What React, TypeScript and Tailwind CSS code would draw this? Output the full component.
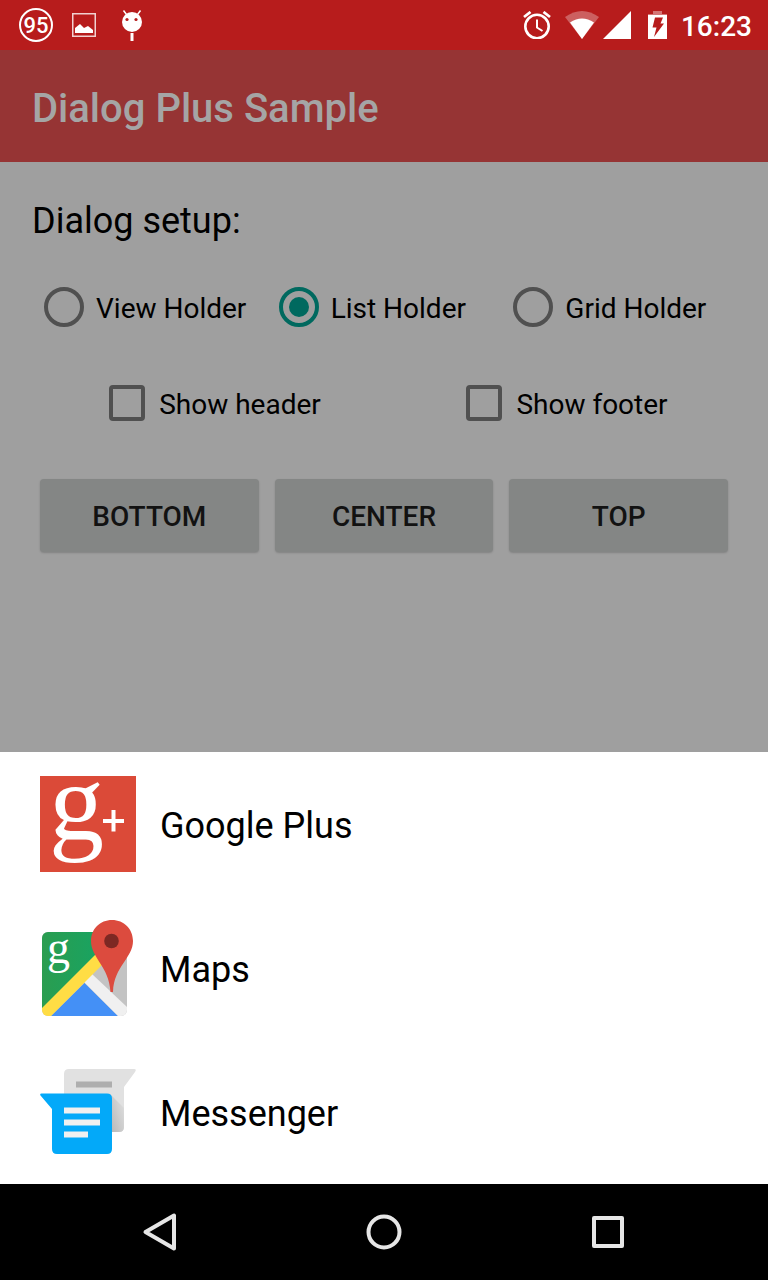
import { useState } from 'react';

function BatteryLevelBadge() {
  return (
    <span className="flex size-[34px] items-center justify-center rounded-full border-2 border-white pt-0.5 font-['Roboto',sans-serif] text-[22px] leading-none font-medium text-white">
      95
    </span>
  );
}

function PictureIcon() {
  return (
    <svg className="h-6 w-6" viewBox="0 0 24 24" aria-hidden="true">
      <rect x="0.75" y="0.75" width="22.5" height="22.5" fill="none" stroke="#fff" strokeOpacity="0.8" strokeWidth="1.5" />
      <path d="M3 20v-5l5-4 4 4 4-2 5 4v3z" fill="#fff" />
    </svg>
  );
}

function DroidIcon() {
  return (
    <svg className="h-8 w-[22px]" viewBox="0 0 22 32" aria-hidden="true">
      <path d="M2.500 1.500l3 4M19.500 1.500l-3 4" stroke="#fff" strokeWidth="1.5" />
      <ellipse cx="11" cy="13" rx="10" ry="10" fill="#fff" />
      <circle cx="6" cy="10.500" r="1.600" fill="#b71c1c" />
      <circle cx="15" cy="10.500" r="1.600" fill="#b71c1c" />
      <path d="M9.500 24h3v8h-3z" fill="#fff" />
    </svg>
  );
}

function AlarmIcon() {
  return (
    <svg className="h-7 w-7" viewBox="0 0 28 28" fill="none" stroke="#fff" aria-hidden="true">
      <circle cx="14" cy="15.500" r="11.700" strokeWidth="2.600" />
      <path d="M1 6l6.500-5M27 6l-6.500-5" strokeWidth="2.800" />
      <path d="M14 8.500v8l5.500 3.500" strokeWidth="2" />
    </svg>
  );
}

function WifiIcon() {
  return (
    <svg className="h-7 w-[34px]" viewBox="0 0 34 28" fill="#fff" aria-hidden="true">
      <path d="M0 6Q17-6 34 6L17 28z" fillOpacity="0.3" />
      <path d="M5 11.500Q17 3.500 29 11.500L17 28z" />
    </svg>
  );
}

function SignalIcon() {
  return (
    <svg className="h-7 w-7" viewBox="0 0 28 28" fill="#fff" aria-hidden="true">
      <path d="M28 0v28H0z" />
    </svg>
  );
}

function ChargingIcon() {
  return (
    <svg className="h-7 w-[19px]" viewBox="0 0 19 28" aria-hidden="true">
      <path d="M5 0h9v3h5v1H0V3h5z" fill="#fff" fillOpacity="0.4" />
      <path d="M0 4h19v24H0z" fill="#fff" />
      <path d="M7 6.500h8l-2.500 6H16L6 26l2.500-9.500h-4z" fill="#b71c1c" />
    </svg>
  );
}

function GooglePlusLogo() {
  return (
    <svg className="size-24 shrink-0 overflow-visible" viewBox="0 0 96 96" aria-hidden="true">
      <rect width="96" height="96" fill="#db4a38" />
      <text x="9" y="64" fontSize="110" fill="#fff" className="font-['Liberation_Serif',serif]">
        g
      </text>
      <path d="M71.500 34h4v9H84v4h-8.500v8.500h-4V47H63v-4h8.500z" fill="#fff" />
    </svg>
  );
}

function MapsLogo() {
  return (
    <svg className="size-24 shrink-0 overflow-visible" viewBox="0 0 96 96" aria-hidden="true">
      <defs>
        <clipPath id="map-tile">
          <rect x="2" y="12" width="85" height="84" rx="6" />
        </clipPath>
        <linearGradient id="map-green" x1="0" y1="0" x2="1" y2="0">
          <stop offset="0" stopColor="#2a9d50" />
          <stop offset="1" stopColor="#16a464" />
        </linearGradient>
      </defs>
      <g clipPath="url(#map-tile)">
        <path d="M2 12h85v84H2z" fill="#c3c3c3" />
        <path d="M2 12h66L55 36 2 89z" fill="url(#map-green)" />
        <path d="M44.500 63L78 96H11z" fill="#4490f6" />
        <path d="M52 54l-8 8 34 34h9v-9z" fill="#f0f0f0" />
        <path d="M2 88l57-57 8 9L11 96H2z" fill="#ffdd45" />
      </g>
      <text x="7" y="43" fontSize="46" fill="#fff" className="font-['Liberation_Serif',serif]">
        g
      </text>
      <path d="M72 0c12 0 21 9 21 21 0 17-19 25-20 51h-2.500C69 46 51 38 51 21 51 9 60 0 72 0z" fill="#dc4b3e" />
      <circle cx="71.500" cy="21" r="7.300" fill="#7d2823" />
    </svg>
  );
}

function MessengerLogo() {
  return (
    <svg className="size-24 shrink-0" viewBox="0 0 96 96" aria-hidden="true">
      <defs>
        <linearGradient id="bubble-shade" gradientUnits="userSpaceOnUse" x1="66" y1="44" x2="86" y2="38">
          <stop offset="0" stopColor="#bcbcbc" />
          <stop offset="1" stopColor="#e1e1e1" />
        </linearGradient>
      </defs>
      <path d="M29 5h65q3 0 1 3L84 23v40q0 5-5 5H24V10q0-5 5-5z" fill="#e1e1e1" />
      <path d="M70 30l14 14v19q0 5-5 5h-9z" fill="url(#bubble-shade)" />
      <path d="M36 17.500h36v6H36z" fill="#aeaeae" />
      <path d="M1.500 29.500H67q5 0 5 5V85q0 5-5 5H17q-5 0-5-5V45L.5 31.500Q-.5 29.500 1.500 29.500z" fill="#03a9f9" />
      <path d="M24 43.500h36v6H24zM24 55.500h36v6H24zM24 67.500h24v6H24z" fill="#f0f0f0" />
    </svg>
  );
}

const holders = ['View Holder', 'List Holder', 'Grid Holder'];
const options = ['Show header', 'Show footer'];
const positions = ['BOTTOM', 'CENTER', 'TOP'];
const apps = [
  { name: 'Google Plus', Logo: GooglePlusLogo },
  { name: 'Maps', Logo: MapsLogo },
  { name: 'Messenger', Logo: MessengerLogo },
];

export default function App() {
  const [holder, setHolder] = useState('List Holder');

  return (
    <div className="flex min-h-screen flex-col bg-[#9f9f9f] font-['Roboto',sans-serif] text-black">
      <div className="flex h-[50px] items-center justify-between bg-[#b71c1c] pr-4 pl-[19px]">
        <div className="flex items-center">
          <BatteryLevelBadge />
          <span className="ml-[19px]"><PictureIcon /></span>
          <span className="ml-[25px]"><DroidIcon /></span>
        </div>
        <div className="flex items-center">
          <AlarmIcon />
          <span className="ml-[14px]"><WifiIcon /></span>
          <span className="ml-1"><SignalIcon /></span>
          <span className="ml-[17px]"><ChargingIcon /></span>
          <span className="ml-[14px] pt-[3px] text-[28px] leading-8 font-medium text-white">16:23</span>
        </div>
      </div>

      <header className="flex h-28 items-center bg-[#963434] px-8">
        <h1 className="pt-1.5 text-[40px] leading-[48px] font-medium text-[#a5a5a5]">Dialog Plus Sample</h1>
      </header>

      <main className="flex-1 px-8 pt-[37px]">
        <h2 className="text-[36px] leading-[44px]">Dialog setup:</h2>

        <div role="radiogroup" aria-label="Holder" className="mt-[31px] grid grid-cols-3">
          {holders.map((name) => (
            <label key={name} className="flex h-[66px] items-center gap-3 pl-3 text-[28px] whitespace-nowrap">
              <input
                type="radio"
                name="holder"
                checked={holder === name}
                onChange={() => setHolder(name)}
                className="grid size-10 shrink-0 appearance-none place-items-center rounded-full border-4 border-[#505050] before:size-5 before:rounded-full checked:border-[#00695f] checked:before:bg-[#00695f]"
              />
              <span className="pt-[3px]">{name}</span>
            </label>
          ))}
        </div>

        <div className="mt-[30px] grid grid-cols-2">
          {options.map((name) => (
            <label key={name} className="flex h-[66px] items-center justify-center gap-[14px] pl-[14px] text-[28px] whitespace-nowrap">
              <input
                type="checkbox"
                className="size-9 shrink-0 appearance-none rounded-[4px] border-4 border-[#505050] checked:border-[#00695f] checked:bg-[#00695f]"
              />
              <span className="pt-[3px]">{name}</span>
            </label>
          ))}
        </div>

        <div className="mt-[43px] grid grid-cols-3">
          {positions.map((name) => (
            <button
              key={name}
              type="button"
              className="mx-2 h-[73px] rounded-[4px] bg-[#848685] pt-0.5 text-[28px] font-medium text-[#121212] shadow-[0_1px_2px_#00000030]"
            >
              {name}
            </button>
          ))}
        </div>
      </main>

      <section role="dialog" aria-label="Choose an app" className="bg-white">
        <ul>
          {apps.map(({ name, Logo }) => (
            <li key={name}>
              <button type="button" className="flex w-full items-center gap-6 px-10 py-6 text-left text-[36px] leading-[44px]">
                <Logo />
                <span className="pt-1">{name}</span>
              </button>
            </li>
          ))}
        </ul>
      </section>

      <nav className="grid h-24 grid-cols-3 bg-black px-12">
        <button type="button" aria-label="Back" className="flex items-center justify-center">
          <svg className="size-12" viewBox="0 0 48 48" fill="none" stroke="#e6e6e6" strokeWidth="4" strokeLinejoin="round">
            <path d="M38 7.500v33L9.500 24z" />
          </svg>
        </button>
        <button type="button" aria-label="Home" className="flex items-center justify-center">
          <svg className="size-12" viewBox="0 0 48 48" fill="none" stroke="#e6e6e6" strokeWidth="4">
            <circle cx="24" cy="24" r="15.500" />
          </svg>
        </button>
        <button type="button" aria-label="Recent apps" className="flex items-center justify-center">
          <svg className="size-12" viewBox="0 0 48 48" fill="none" stroke="#e6e6e6" strokeWidth="4" strokeLinejoin="round">
            <rect x="10" y="10" width="28" height="28" />
          </svg>
        </button>
      </nav>
    </div>
  );
}
